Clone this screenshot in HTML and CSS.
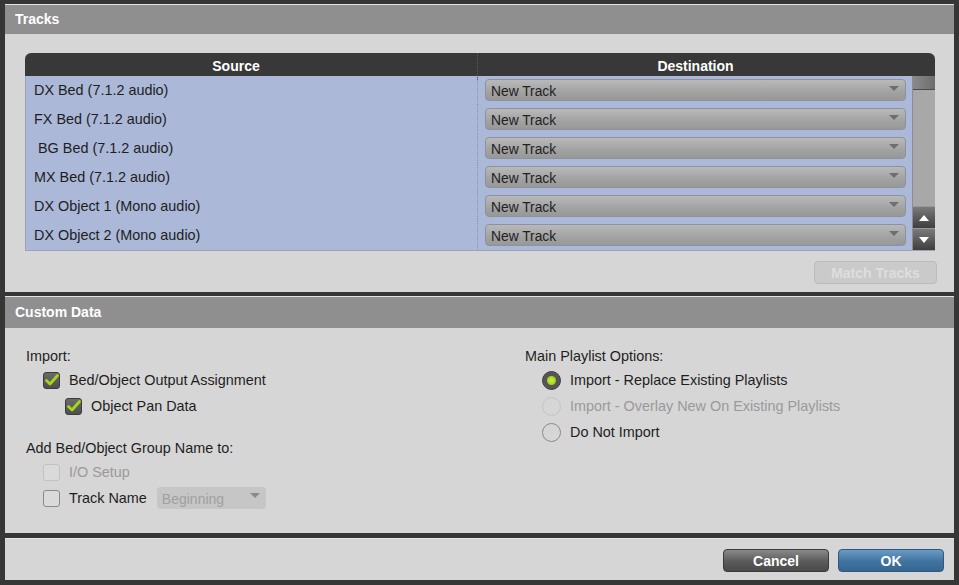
FILE: index.html
```html
<!DOCTYPE html>
<html lang="en">
<head>
  <meta charset="UTF-8">
  <title>Import Session Data</title>
  <link rel="stylesheet" href="styles.css">
</head>
<body>
  <div class="dialog">
    <div class="panel tracks-panel">
      <div class="panel-title">Tracks</div>
      <div class="panel-body">
        <div class="track-table">
          <div class="table-head">
            <div class="head-cell src-head">Source</div>
            <div class="head-cell dest">Destination</div>
            <div></div>
          </div>
          <div class="table-body">
            <div class="rows">
              <div class="row"><div class="src">DX Bed (7.1.2 audio)</div><div class="dst"><div class="dropdown">New Track</div></div></div>
              <div class="row"><div class="src">FX Bed (7.1.2 audio)</div><div class="dst"><div class="dropdown">New Track</div></div></div>
              <div class="row"><div class="src">&nbsp;BG Bed (7.1.2 audio)</div><div class="dst"><div class="dropdown">New Track</div></div></div>
              <div class="row"><div class="src">MX Bed (7.1.2 audio)</div><div class="dst"><div class="dropdown">New Track</div></div></div>
              <div class="row"><div class="src">DX Object 1 (Mono audio)</div><div class="dst"><div class="dropdown">New Track</div></div></div>
              <div class="row"><div class="src">DX Object 2 (Mono audio)</div><div class="dst"><div class="dropdown">New Track</div></div></div>
            </div>
            <div class="scrollbar">
              <div class="thumb"></div>
              <div class="track-space"></div>
              <div class="arrow up"><svg width="10" height="6" viewBox="0 0 10 6"><path d="M0 6 L5 0 L10 6 Z" fill="#fff"/></svg></div>
              <div class="arrow down"><svg width="10" height="6" viewBox="0 0 10 6"><path d="M0 0 L5 6 L10 0 Z" fill="#fff"/></svg></div>
            </div>
          </div>
        </div>
        <div class="match-row">
          <button class="btn match">Match Tracks</button>
        </div>
      </div>
    </div>

    <div class="panel custom-panel">
      <div class="panel-title">Custom Data</div>
      <div class="panel-body custom-body">
        <div class="col">
          <div class="label">Import:</div>
          <div class="opt indent1"><span class="check on"><svg width="14" height="12" viewBox="0 0 14 12"><path d="M1.5 6.5 L5 10 L12.5 1.5" stroke="#a6d61c" stroke-width="2.8" fill="none" stroke-linecap="round" stroke-linejoin="round"/></svg></span>Bed/Object Output Assignment</div>
          <div class="opt indent2"><span class="check on"><svg width="14" height="12" viewBox="0 0 14 12"><path d="M1.5 6.5 L5 10 L12.5 1.5" stroke="#a6d61c" stroke-width="2.8" fill="none" stroke-linecap="round" stroke-linejoin="round"/></svg></span>Object Pan Data</div>
          <div class="label group-label">Add Bed/Object Group Name to:</div>
          <div class="opt indent1 disabled"><span class="check off faint"></span>I/O Setup</div>
          <div class="opt indent1"><span class="check off"></span>Track Name<div class="dropdown small">Beginning</div></div>
        </div>
        <div class="col">
          <div class="label">Main Playlist Options:</div>
          <div class="opt indent1"><span class="radio on"><span class="dot"></span></span>Import - Replace Existing Playlists</div>
          <div class="opt indent1 disabled"><span class="radio faint"></span>Import - Overlay New On Existing Playlists</div>
          <div class="opt indent1"><span class="radio"></span>Do Not Import</div>
        </div>
      </div>
    </div>

    <div class="panel footer">
      <button class="btn cancel">Cancel</button>
      <button class="btn ok">OK</button>
    </div>
  </div>
</body>
</html>
```

FILE: styles.css
```css
body {
  margin: 0;
  background-color: #363636;
  font-family: "Liberation Sans", Arial, Helvetica, sans-serif;
  font-size: 14.4px;
  color: #1e1e1e;
}
.dialog {
  width: 959px;
  height: 585px;
  padding: 4px 5px 0 5px;
  box-sizing: border-box;
  display: flex;
  flex-direction: column;
  gap: 4px;
}
.panel {
  background-color: #d6d6d6;
  border-top: 1px solid #e4e4e4;
}
.panel-title {
  height: 29px;
  line-height: 29px;
  background-color: #8f8f8f;
  color: #fff;
  font-weight: bold;
  font-size: 14px;
  padding-left: 10px;
}
.custom-panel .panel-title {
  height: 31px;
  line-height: 31px;
}
.tracks-panel .panel-body {
  padding: 19px 19px 8px 20px;
}
.track-table {
  width: 910px;
}
.table-head {
  display: grid;
  grid-template-columns: 452px 1fr 22px;
  height: 23px;
  background-color: #383838;
  border-radius: 6px 6px 0 0;
}
.head-cell {
  color: #fff;
  font-weight: bold;
  font-size: 14px;
  text-align: center;
  line-height: 27px;
}
.head-cell.src-head {
  padding-right: 30px;
}
.head-cell.dest {
  border-left: 1px dotted #5a5a5a;
}
.table-body {
  display: flex;
  background-color: #abb8d7;
  border-bottom: 1px solid #9aa4bb;
  border-left: 1px solid #9aa4bb;
}
.rows {
  flex: 1;
}
.row {
  display: grid;
  grid-template-columns: 451px 1fr;
  height: 29px;
}
.src {
  padding-left: 8px;
  line-height: 29px;
  white-space: pre;
}
.dst {
  border-left: 1px dotted #8a94aa;
  padding: 3px 6px 4px 7px;
}
.dropdown {
  position: relative;
  height: 22px;
  line-height: 24px;
  box-sizing: border-box;
  padding-left: 5px;
  font-size: 13.8px;
  border-radius: 4px;
  border: 1px solid #8c93a0;
  background: linear-gradient(#b9b9b9, #a2a2a2 60%, #989898);
  color: #222;
}
.dropdown::after {
  content: "";
  position: absolute;
  right: 6px;
  top: 6px;
  border-left: 5px solid transparent;
  border-right: 5px solid transparent;
  border-top: 5px solid #6e6e6e;
}
.scrollbar {
  width: 22px;
  display: flex;
  flex-direction: column;
  background-color: #a8a8a8;
  border-left: 1px solid #8d8d8d;
}
.thumb {
  height: 13px;
  background: linear-gradient(90deg, #8a8a8a, #6d6d6d);
  border-bottom: 1px solid #4a4a4a;
}
.track-space {
  flex: 1;
}
.arrow {
  height: 21px;
  display: flex;
  align-items: center;
  justify-content: center;
  background: linear-gradient(#7a7a7a, #3e3e3e);
  border-top: 1px solid #9a9a9a;
}
.match-row {
  display: flex;
  justify-content: flex-end;
  margin-top: 10px;
}
.btn {
  height: 23px;
  border-radius: 4px;
  font-family: "Liberation Sans", Arial, sans-serif;
  font-weight: bold;
  font-size: 14px;
  color: #fff;
  padding: 0;
}
.btn.match {
  width: 123px;
  margin-right: -2px;
  background-color: #cacaca;
  border: 1px solid #bcbcbc;
  color: #dedede;
}
.custom-panel {
  flex: 1;
}
.custom-body {
  display: grid;
  grid-template-columns: 499px 1fr;
  padding: 17px 21px 0 21px;
}
.label {
  height: 22px;
  line-height: 22px;
}
.group-label {
  margin-top: 18px;
}
.opt {
  display: flex;
  align-items: center;
  height: 26px;
}
.opt.indent1 {
  padding-left: 17px;
}
.opt.indent2 {
  padding-left: 39px;
}
.opt.disabled {
  color: #9a9a9a;
}
.check {
  width: 17px;
  height: 17px;
  box-sizing: border-box;
  border-radius: 3px;
  margin-right: 9px;
  display: flex;
  align-items: center;
  justify-content: center;
}
.check.on {
  background: linear-gradient(#6a6a6a, #4e4e4e);
  border: 1px solid #3c3c3c;
}
.check.off {
  border: 1px solid #8a8a8a;
  background-color: #dadada;
}
.check.faint {
  border-color: #c2c2c2;
}
.radio {
  width: 19px;
  height: 19px;
  box-sizing: border-box;
  border-radius: 50%;
  border: 1px solid #8a8a8a;
  margin-right: 9px;
  display: flex;
  align-items: center;
  justify-content: center;
}
.radio.faint {
  border-color: #c4c4c4;
}
.radio.on {
  background: #555;
  border-color: #3e3e3e;
}
.dot {
  width: 9px;
  height: 9px;
  border-radius: 50%;
  background: radial-gradient(#c8f03a, #8fc21a);
}
.dropdown.small {
  width: 109px;
  margin-left: 10px;
  border: none;
  background: #c6c6c6;
  color: #a0a0a0;
  font-size: 14px;
}
.dropdown.small::after {
  border-top-color: #8a8a8a;
}
.footer {
  height: 42px;
  margin-top: 1px;
  margin-bottom: 5px;
  display: flex;
  justify-content: flex-end;
  align-items: flex-start;
  gap: 9px;
  padding: 10px 10px 0 0;
  box-sizing: border-box;
}
.btn.cancel {
  width: 106px;
  background: linear-gradient(#8a8a8a, #5a5a5a 55%, #4a4a4a);
  border: 1px solid #3a3a3a;
}
.btn.ok {
  width: 106px;
  background: linear-gradient(#6a9bc6, #40739f 55%, #346690);
  border: 1px solid #2c5780;
}
```
